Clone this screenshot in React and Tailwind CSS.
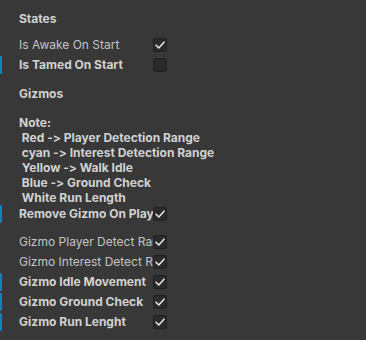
import React from 'react';

const Check = ({ checked }) => (
  <div className="w-[14px] h-[14px] shrink-0 rounded-[2px] bg-[#2a2a2a] border border-[#212121] flex items-center justify-center">
    {checked && (
      <svg width="10" height="8" viewBox="0 0 10 8" fill="none">
        <path d="M1 4.2 L3.8 7 L9 1.2" stroke="#e4e4e4" strokeWidth="1.6" strokeLinecap="round" strokeLinejoin="round" />
      </svg>
    )}
  </div>
);

const Row = ({ label, checked, bold, modified, className = '' }) => (
  <div className={`relative h-[18px] flex items-center ${className}`}>
    {modified && <div className="absolute left-0 top-0 h-full w-[2px] bg-[#0f81be]" />}
    <div
      className={`ml-[19px] w-[134px] overflow-hidden whitespace-nowrap ${bold ? 'font-bold text-[#d2d2d2]' : 'text-[#c4c4c4]'}`}
    >
      {label}
    </div>
    <Check checked={checked} />
  </div>
);

const Header = ({ children, className = '' }) => (
  <div className={`h-[18px] flex items-center pl-[19px] font-bold text-[#d2d2d2] ${className}`}>{children}</div>
);

export default function App() {
  const notes = [
    ' Red -> Player Detection Range',
    ' cyan -> Interest Detection Range',
    ' Yellow -> Walk Idle',
    ' Blue -> Ground Check',
    ' White Run Length',
  ];

  return (
    <div
      className="w-[366px] h-[340px] bg-[#383838] text-[12px] overflow-hidden pt-[10px] [font-feature-settings:'calt'_0,'liga'_0]"
      style={{ fontFamily: 'Inter, "Noto Sans", sans-serif' }}
    >
      <Header>States</Header>
      <Row className="mt-[8px]" label="Is Awake On Start" checked />
      <Row className="mt-[2px]" label="Is Tamed On Start" bold modified />
      <Header className="mt-[11px]">Gizmos</Header>

      <div className="mt-[12px] pl-[19px] font-bold text-[#d2d2d2] leading-[15px] whitespace-pre">
        <div>Note:</div>
        {notes.map((n) => (
          <div key={n}>{n}</div>
        ))}
      </div>

      <Row label="Remove Gizmo On Play" checked bold modified />

      <Row className="mt-[10px]" label="Gizmo Player Detect Range" checked />
      <Row className="mt-[2px]" label="Gizmo Interest Detect Range" checked />
      <Row className="mt-[2px]" label="Gizmo Idle Movement" checked bold modified />
      <Row className="mt-[2px]" label="Gizmo Ground Check" checked bold modified />
      <Row className="mt-[2px]" label="Gizmo Run Lenght" checked bold modified />
    </div>
  );
}
